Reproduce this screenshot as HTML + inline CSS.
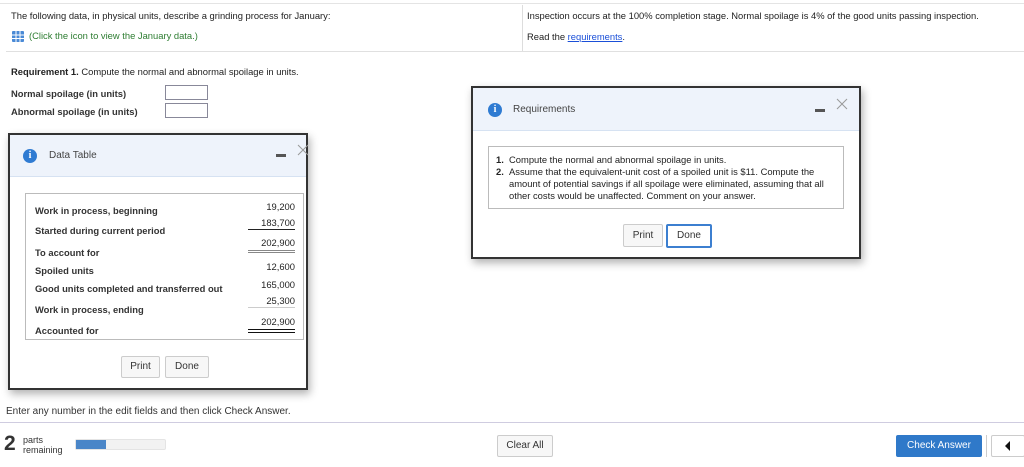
<!DOCTYPE html>
<html><head><style>
*{margin:0;padding:0;box-sizing:border-box}
body{width:1024px;height:467px;position:relative;background:#fff;font-family:"Liberation Sans",Arial,sans-serif;color:#222;overflow:hidden;font-size:9.4px}
.a{position:absolute;white-space:nowrap}
.box{position:absolute;border:1px solid #9aa;background:#fff}
.btn{position:absolute;border:1px solid #ccc;border-radius:2px;background:#f7f7f7;font-size:10px;color:#333;text-align:center}
.dlg{position:absolute;border:2px solid #333;background:#fff;box-shadow:2px 4px 8px rgba(0,0,0,.3)}
.hd{position:absolute;left:0;right:0;top:0;background:#eef3fb;border-bottom:1px solid #d6e2f2}
.ic{position:absolute;width:14px;height:14px;border-radius:50%;background:#2f7bd2;color:#fff;font:bold 10px "Liberation Serif",serif;text-align:center;line-height:14px}
.min{position:absolute;width:9px;height:3px;background:#555}
</style></head><body>
<div class="a" style="left:0;top:3px;width:1024px;height:1px;background:#e4e4e4"></div>
<div class="a" style="left:522px;top:5px;width:1px;height:46px;background:#ddd"></div>
<div class="a" style="left:6px;top:51px;width:1018px;height:1px;background:#e0e0e0"></div>
<div class="a" style="left:11px;top:10px">The following data, in physical units, describe a grinding process for January:</div>
<div class="a" style="left:12px;top:31px;width:12px;height:11px;background:#4a8ad6;border-radius:1px"><svg width="12" height="11"><path d="M0 4h12M0 7.5h12M4 0v11M8 0v11" stroke="#fff" stroke-width="1"/></svg></div>
<div class="a" style="left:29px;top:30px;color:#2e7d32">(Click the icon to view the January data.)</div>
<div class="a" style="left:527px;top:10px">Inspection occurs at the 100% completion stage. Normal spoilage is 4% of the good units passing inspection.</div>
<div class="a" style="left:527px;top:31px">Read the <span style="color:#1a4fd8;text-decoration:underline">requirements</span>.</div>
<div class="a" style="left:11px;top:66px"><b>Requirement 1.</b> Compute the normal and abnormal spoilage in units.</div>
<div class="a" style="left:11px;top:88px;font-weight:bold;color:#333">Normal spoilage (in units)</div>
<div class="a" style="left:11px;top:106px;font-weight:bold;color:#333">Abnormal spoilage (in units)</div>
<div class="box" style="left:165px;top:85px;width:43px;height:15px;border-color:#889"></div>
<div class="box" style="left:165px;top:103px;width:43px;height:15px;border-color:#889"></div>

<div class="dlg" style="left:8px;top:133px;width:300px;height:257px">
 <div class="hd" style="height:42px"></div>
 <div class="ic" style="left:13px;top:14px">i</div>
 <div class="a" style="left:39px;top:15px;font-size:10px;color:#444">Data Table</div>
 <div class="min" style="left:266px;top:19px;width:10px"></div>
 <svg class="a" style="left:287px;top:9px" width="12" height="12"><path d="M1 1L11 11M11 1L1 11" stroke="#999" stroke-width="1"/></svg>
 <div class="box" style="left:15px;top:58px;width:279px;height:147px;border-color:#bbb">
  <div class="a" style="left:9px;top:11px;font-weight:bold;color:#333">Work in process, beginning</div>
  <div class="a" style="left:9px;top:31px;font-weight:bold;color:#333">Started during current period</div>
  <div class="a" style="left:9px;top:53px;font-weight:bold;color:#333">To account for</div>
  <div class="a" style="left:9px;top:71px;font-weight:bold;color:#333">Spoiled units</div>
  <div class="a" style="left:9px;top:89px;font-weight:bold;color:#333">Good units completed and transferred out</div>
  <div class="a" style="left:9px;top:110px;font-weight:bold;color:#333">Work in process, ending</div>
  <div class="a" style="left:9px;top:131px;font-weight:bold;color:#333">Accounted for</div>
  <div class="a" style="left:222px;top:7px;width:47px;text-align:right">19,200</div>
  <div class="a" style="left:222px;top:23px;width:47px;text-align:right">183,700</div>
  <div class="a" style="left:222px;top:35px;width:47px;height:1px;background:#222"></div>
  <div class="a" style="left:222px;top:43px;width:47px;text-align:right">202,900</div>
  <div class="a" style="left:222px;top:56px;width:47px;height:3px;border-top:1px solid #888;border-bottom:1px solid #888"></div>
  <div class="a" style="left:222px;top:67px;width:47px;text-align:right">12,600</div>
  <div class="a" style="left:222px;top:85px;width:47px;text-align:right">165,000</div>
  <div class="a" style="left:222px;top:101px;width:47px;text-align:right">25,300</div>
  <div class="a" style="left:222px;top:113px;width:47px;height:1px;background:#ccc"></div>
  <div class="a" style="left:222px;top:122px;width:47px;text-align:right">202,900</div>
  <div class="a" style="left:222px;top:135px;width:47px;height:4px;border-top:1px solid #111;border-bottom:1px solid #111"></div>
 </div>
 <div class="btn" style="left:111px;top:221px;width:39px;height:22px;line-height:20px">Print</div>
 <div class="btn" style="left:155px;top:221px;width:44px;height:22px;line-height:20px">Done</div>
</div>

<div class="dlg" style="left:471px;top:86px;width:390px;height:173px">
 <div class="hd" style="height:43px"></div>
 <div class="ic" style="left:15px;top:15px">i</div>
 <div class="a" style="left:40px;top:16px;font-size:10px;color:#444">Requirements</div>
 <div class="min" style="left:342px;top:21px;width:10px"></div>
 <svg class="a" style="left:363px;top:10px" width="12" height="12"><path d="M1 1L11 11M11 1L1 11" stroke="#999" stroke-width="1"/></svg>
 <div class="box" style="left:15px;top:58px;width:356px;height:63px;border-color:#bbb">
  <div class="a" style="left:7px;top:7px;line-height:12px"><b>1.</b>&nbsp;&nbsp;Compute the normal and abnormal spoilage in units.</div>
  <div class="a" style="left:7px;top:19px;line-height:12px"><b>2.</b>&nbsp;&nbsp;Assume that the equivalent-unit cost of a spoiled unit is $11. Compute the<br>&nbsp;&nbsp;&nbsp;&nbsp;&nbsp;amount of potential savings if all spoilage were eliminated, assuming that all<br>&nbsp;&nbsp;&nbsp;&nbsp;&nbsp;other costs would be unaffected. Comment on your answer.</div>
 </div>
 <div class="btn" style="left:150px;top:136px;width:40px;height:23px;line-height:21px">Print</div>
 <div class="btn" style="left:193px;top:136px;width:46px;height:24px;line-height:20px;border:2px solid #3c7fd0;background:#fff">Done</div>
</div>

<div class="a" style="left:6px;top:406px;font-size:10px;color:#333">Enter any number in the edit fields and then click Check Answer.</div>
<div class="a" style="left:0;top:422px;width:1024px;height:1px;background:#cfcce0"></div>
<div class="a" style="left:4px;top:432px;font-size:21px;font-weight:bold;color:#333">2</div>
<div class="a" style="left:23px;top:435px;font-size:9px;line-height:10px;color:#333">parts<br>remaining</div>
<div class="a" style="left:75px;top:439px;width:91px;height:11px;background:#f2f2f2;border:1px solid #e4e4e4;border-radius:2px"><div style="width:30px;height:9px;background:#4a86c8"></div></div>
<div class="btn" style="left:497px;top:435px;width:56px;height:22px;line-height:20px">Clear All</div>
<div class="a" style="left:896px;top:435px;width:86px;height:22px;background:#2f79c9;border-radius:2px;color:#fff;font-size:10px;text-align:center;line-height:22px">Check Answer</div>
<div class="a" style="left:986px;top:435px;width:1px;height:22px;background:#ccc"></div>
<div class="btn" style="left:991px;top:435px;width:34px;height:22px;background:#fff"><svg width="30" height="20"><path d="M12 10L17 5V15Z" fill="#111"/></svg></div>
</body></html>
